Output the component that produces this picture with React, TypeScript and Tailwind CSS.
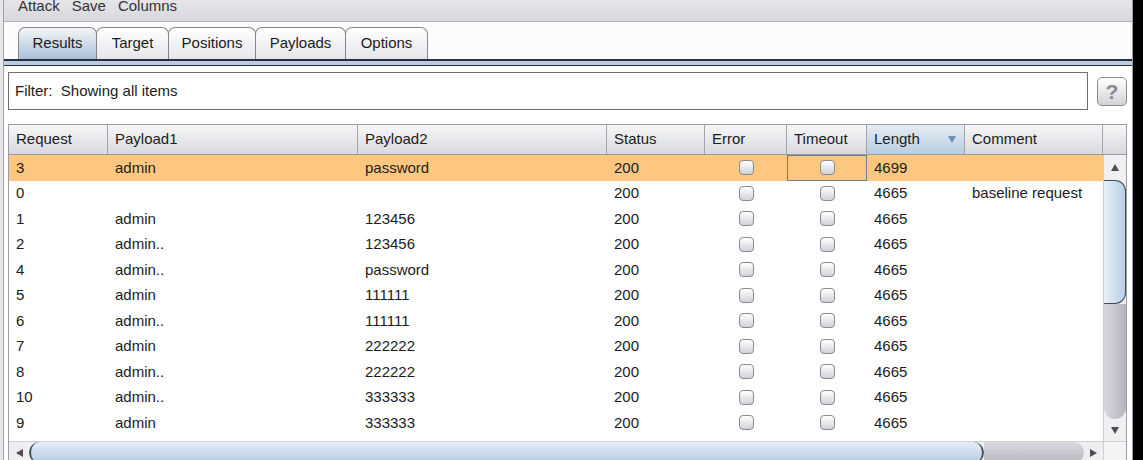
import React from 'react';

const cols = [
    { label: 'Request', w: 'w-[99px]' },
    { label: 'Payload1', w: 'w-[250px]' },
    { label: 'Payload2', w: 'w-[249px]' },
    { label: 'Status', w: 'w-[98px]' },
    { label: 'Error', w: 'w-[82px]' },
    { label: 'Timeout', w: 'w-[80px]' },
    { label: 'Length', w: 'w-[98px]' },
    { label: 'Comment', w: 'w-[138px]' },
];

const rows = [
    ['3', 'admin', 'password', '200', '4699', ''],
    ['0', '', '', '200', '4665', 'baseline request'],
    ['1', 'admin', '123456', '200', '4665', ''],
    ['2', 'admin..', '123456', '200', '4665', ''],
    ['4', 'admin..', 'password', '200', '4665', ''],
    ['5', 'admin', '111111', '200', '4665', ''],
    ['6', 'admin..', '111111', '200', '4665', ''],
    ['7', 'admin', '222222', '200', '4665', ''],
    ['8', 'admin..', '222222', '200', '4665', ''],
    ['10', 'admin..', '333333', '200', '4665', ''],
    ['9', 'admin', '333333', '200', '4665', ''],
];

const tabs = [
    { label: 'Results', w: 'w-[79px]' },
    { label: 'Target', w: 'w-[73px]' },
    { label: 'Positions', w: 'w-[88px]' },
    { label: 'Payloads', w: 'w-[91px]' },
    { label: 'Options', w: 'w-[83px]' },
];

const Check = () => (
    <span className="block w-[15px] h-[15px] rounded-[4px] border border-[#8a8a92] bg-linear-to-b from-white to-[#d0d2d8]" />
);

const Cell = ({ w, children, center }: { w: string; children?: React.ReactNode; center?: boolean }) => (
    <div className={`${w} h-full flex items-center ${center ? 'justify-center' : 'pl-[7px]'} whitespace-nowrap`}>{children}</div>
);

export default function App() {
    return (
        <div className="w-[1143px] h-[460px] overflow-hidden bg-black flex font-['Liberation_Sans',Arial,sans-serif] text-[15px] text-[#1c1c1c]">
            <div className="w-[1133px] h-full flex flex-col bg-[#fbfbfc] border-l-[3px] border-l-[#e6e6ea] border-r border-r-[#9a9aa2] overflow-hidden">
                <div className="h-full flex flex-col border-l border-[#a2a2aa]">
                    {/* menu bar */}
                    <div className="h-[22px] shrink-0 flex gap-[12px] pl-[14px] bg-linear-to-b from-[#e6e6ea] to-[#d6d6dc] border-b border-[#b0b0b8] text-[#333]">
                        <span className="-mt-[2px] leading-[15px]">Attack</span>
                        <span className="-mt-[2px] leading-[15px]">Save</span>
                        <span className="-mt-[2px] leading-[15px]">Columns</span>
                    </div>

                    {/* tabs */}
                    <div className="flex pl-[14px] pt-[5px] bg-[#fcfcfc]">
                        {tabs.map((t, i) => (
                            <div
                                key={t.label}
                                className={`${t.w} h-[32px] flex items-center justify-center rounded-t-[7px] border border-b-0 border-[#86868e] ${
                                    i === 0 ? 'bg-linear-to-b from-[#f4f6f8] to-[#a9c2d9]' : 'bg-linear-to-b from-white to-[#e6e6ea]'
                                } ${i > 0 ? '-ml-px' : ''}`}
                            >
                                {t.label}
                            </div>
                        ))}
                    </div>
                    <div className="h-[7px] shrink-0 border-t-2 border-b border-[#26303e] bg-[#bacde0]" />

                    {/* content */}
                    <div className="flex-1 flex flex-col pl-[4px] pt-[6px] bg-white">
                        <div className="flex items-center gap-[9px]">
                            <div className="w-[1080px] h-[38px] border border-[#6e6e74] bg-white flex items-center pl-[6px]">
                                Filter:&nbsp; Showing all items
                            </div>
                            <div className="w-[30px] h-[29px] rounded-[5px] border border-[#8c8c90] bg-linear-to-b from-white to-[#d4d4d8] flex items-center justify-center text-[21px] font-bold text-[#8a8a8e] leading-none">
                                ?
                            </div>
                        </div>

                        {/* table */}
                        <div className="mt-[14px] w-[1119px] flex-1 flex flex-col border border-[#9c9ca4] bg-white">
                            {/* header */}
                            <div className="h-[30px] shrink-0 flex border-b border-[#9a9aa2] bg-linear-to-b from-[#f7f7f9] to-[#d8d9de]">
                                {cols.map((c) => (
                                    <div
                                        key={c.label}
                                        className={`${c.w} h-full flex items-center justify-between pl-[7px] pr-[8px] border-r border-[#a4a4ac] ${
                                            c.label === 'Length' ? 'bg-linear-to-b from-[#e6edf4] to-[#b9cde0]' : ''
                                        }`}
                                    >
                                        <span>{c.label}</span>
                                        {c.label === 'Length' && (
                                            <span className="w-0 h-0 border-x-[4px] border-x-transparent border-t-[7px] border-t-[#6a8db3]" />
                                        )}
                                    </div>
                                ))}
                                <div className="flex-1" />
                            </div>

                            {/* body */}
                            <div className="h-[286px] shrink-0 flex">
                                <div className="w-[1094px] flex flex-col">
                                    {rows.map((r, i) => (
                                        <div key={i} className={`h-[25.5px] shrink-0 flex ${i === 0 ? 'bg-[#fec77f]' : ''}`}>
                                            <Cell w="w-[99px]">{r[0]}</Cell>
                                            <Cell w="w-[250px]">{r[1]}</Cell>
                                            <Cell w="w-[249px]">{r[2]}</Cell>
                                            <Cell w="w-[98px]">{r[3]}</Cell>
                                            <Cell w="w-[82px]" center>
                                                <Check />
                                            </Cell>
                                            <div className={`w-[80px] h-full flex items-center justify-center ${i === 0 ? 'border border-[#6f7e8e]' : ''}`}>
                                                <Check />
                                            </div>
                                            <Cell w="w-[98px]">{r[4]}</Cell>
                                            <Cell w="w-[138px]">{r[5]}</Cell>
                                        </div>
                                    ))}
                                </div>

                                {/* vertical scrollbar */}
                                <div className="w-[23px] flex flex-col border-l border-[#cfcfd4] bg-[#f0f0f2]">
                                    <div className="h-[25px] shrink-0 flex items-center justify-center">
                                        <span className="w-0 h-0 border-x-[4px] border-x-transparent border-b-[7px] border-b-[#4c4c54]" />
                                    </div>
                                    <div className="h-[124px] shrink-0 rounded-r-[11px] border-y border-r border-[#3e4c5c] bg-linear-to-r from-[#e8f0f7] to-[#b8cfe3]" />
                                    <div className="flex-1 rounded-b-[11px] bg-linear-to-r from-[#d8d8de] to-[#b4b4bc]" />
                                    <div className="h-[22px] shrink-0 flex items-center justify-center">
                                        <span className="w-0 h-0 border-x-[4px] border-x-transparent border-t-[7px] border-t-[#4c4c54]" />
                                    </div>
                                </div>
                            </div>

                            {/* horizontal scrollbar */}
                            <div className="h-[22px] shrink-0 flex border-t border-[#cfcfd4] bg-[#eeeef0]">
                                <div className="w-[20px] flex items-center justify-center">
                                    <span className="w-0 h-0 border-y-[4px] border-y-transparent border-r-[7px] border-r-[#4c4c54]" />
                                </div>
                                <div className="w-[955px] rounded-full border-x-2 border-[#3e4c5c] bg-linear-to-b from-[#e6eef6] to-[#b4cbe0]" />
                                <div className="w-[100px] rounded-r-full bg-linear-to-b from-[#d8d8de] to-[#b8b8c0]" />
                                <div className="w-[19px] flex items-center justify-center">
                                    <span className="w-0 h-0 border-y-[4px] border-y-transparent border-l-[7px] border-l-[#4c4c54]" />
                                </div>
                                <div className="flex-1 bg-[#f4f4f6] border-l border-[#cfcfd4]" />
                            </div>
                        </div>
                    </div>
                </div>
            </div>
        </div>
    );
}
